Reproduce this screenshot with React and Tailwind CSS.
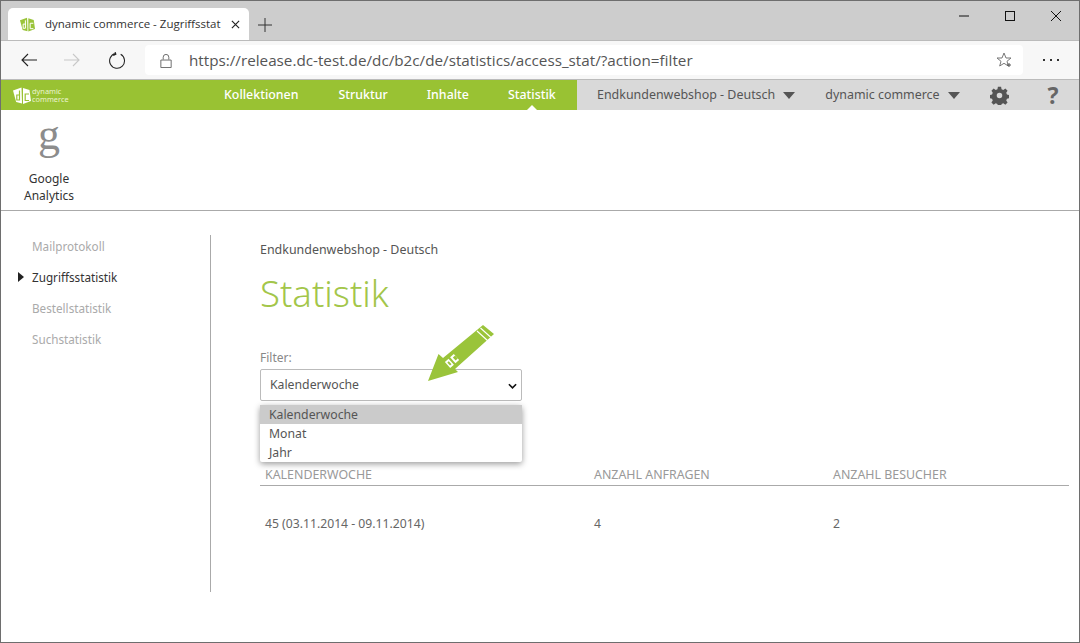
import React from "react";

function Logo({ className, fill, cut }) {
  return (
    <svg viewBox="0 0 18 17" className={className}>
      <path d="M0 3.500 L8.500 0.500 L9 16.500 L3.200 15 L1.500 9 Z" fill={fill} />
      <path d="M10 1 L16.500 3 L18 14 L10 17 Z" fill={fill} />
      <path d="M6.500 3.500 V13 H3.800 V8 H6.500" fill="none" stroke={cut} strokeWidth="1.200" />
      <path d="M16 7 H12.200 V13.500 H16" fill="none" stroke={cut} strokeWidth="1.200" />
    </svg>
  );
}

export default function App() {
  return (
    <div className="w-[1080px] h-[643px] overflow-hidden relative bg-white border border-[#6e6e6e] font-['Noto_Sans',sans-serif] text-[#555]">
      {/* tab strip */}
      <div className="h-[39px] bg-[#cdcdcd] flex items-end pl-[7px] relative">
        <div className="w-[241px] h-[32px] bg-white rounded-t-[5px] flex items-center pl-[12px] pr-[9px]">
          <Logo className="w-[15px] h-[15px] shrink-0" fill="#9ac43a" cut="#ffffff" />
          <span className="ml-[10px] whitespace-nowrap text-[11.500px] text-[#333] font-['Open_Sans',sans-serif]">dynamic commerce - Zugriffsstat</span>
          <svg viewBox="0 0 10 10" className="w-[9px] h-[9px] ml-auto shrink-0"><path d="M1 1 L9 9 M9 1 L1 9" stroke="#222" strokeWidth="1.3" /></svg>
        </div>
        <svg viewBox="0 0 14 14" className="w-[14px] h-[14px] ml-[9px] mb-[8px]"><path d="M7 0 V14 M0 7 H14" stroke="#333" strokeWidth="1" /></svg>
        <div className="ml-auto flex items-center h-[30px] self-start pr-[18px]">
          <svg viewBox="0 0 10 10" className="w-[10px] h-[10px] mr-[36px]"><path d="M0 5 H10" stroke="#111" strokeWidth="1" /></svg>
          <svg viewBox="0 0 10 10" className="w-[10px] h-[10px] mr-[36px]"><rect x=".5" y=".5" width="9" height="9" fill="none" stroke="#111" strokeWidth="1" /></svg>
          <svg viewBox="0 0 10 10" className="w-[10px] h-[10px]"><path d="M0 0 L10 10 M10 0 L0 10" stroke="#111" strokeWidth="1" /></svg>
        </div>
      </div>
      {/* address bar */}
      <div className="h-[40px] bg-[#f7f7f7] border-t border-[#bbb] border-b flex items-center pl-[20px]">
        <svg viewBox="0 0 16 14" className="w-[16px] h-[14px]"><path d="M16 7 H1 M7 1 L1 7 L7 13" fill="none" stroke="#222" strokeWidth="1.1" /></svg>
        <svg viewBox="0 0 16 14" className="w-[16px] h-[14px] ml-[27px]"><path d="M0 7 H15 M9 1 L15 7 L9 13" fill="none" stroke="#c8c8c8" strokeWidth="1.1" /></svg>
        <svg viewBox="0 0 16 16" className="w-[17px] h-[17px] ml-[29px]"><path d="M6 1.500 A7 7 0 1 0 11 2.200 M5.500 -0.500 L6.500 2 L4 3.200" fill="none" stroke="#222" strokeWidth="1" /></svg>
        <div className="ml-[19px] w-[878px] h-[30px] bg-white rounded-[4px] flex items-center pl-[15px] pr-[11px]">
          <svg viewBox="0 0 12 16" className="w-[12px] h-[15px]"><path d="M3 7 V4.500 A3 3 0 0 1 9 4.500 V7 M.5 7.500 H11.500 V15.500 H.5 Z" fill="none" stroke="#666" strokeWidth="1" /></svg>
          <span className="ml-[17px] mt-[1px] text-[15.240px] text-[#555] font-['Open_Sans',sans-serif] whitespace-nowrap">https://release.dc-test.de/dc/b2c/de/statistics/access_stat/?action=filter</span>
          <svg viewBox="0 0 16 16" className="w-[16px] h-[16px] ml-auto"><path d="M8 1 L10 6 H15 L11 9.300 L12.300 14 L8 11.300 L3.700 14 L5 9.300 L1 6 H6 Z" fill="none" stroke="#777" strokeWidth="1" /><path d="M13 11 V15 M11 13 H15" stroke="#555" strokeWidth="1" /></svg>
        </div>
        <span className="ml-[20px] flex gap-[3px]">
          <i className="w-[2px] h-[2px] bg-[#333]" /><i className="w-[2px] h-[2px] bg-[#333] ml-[2px]" /><i className="w-[2px] h-[2px] bg-[#333] ml-[2px]" />
        </span>
      </div>
      {/* nav */}
      <div className="h-[30px] flex">
        <div className="w-[576px] bg-[#99c233] flex items-center text-white relative">
          <div className="flex items-center pl-[12px] w-[223px]">
            <Logo className="w-[18px] h-[17px] shrink-0" fill="#ffffff" cut="#99c233" />
            <span className="ml-[1px] text-[7.400px] leading-[8px] text-[#eaf3d0]">dynamic<br />commerce</span>
          </div>
          <span className="text-[12.400px] font-medium">Kollektionen</span>
          <span className="text-[12.400px] font-medium ml-[40px]">Struktur</span>
          <span className="text-[12.400px] font-medium ml-[39px]">Inhalte</span>
          <span className="text-[12.400px] font-medium ml-[39px]">Statistik</span>
          <span className="absolute left-[526px] bottom-0 w-0 h-0 border-x-[5px] border-x-transparent border-b-[5px] border-b-white" />
        </div>
        <div className="flex-1 bg-[#d9d9d9] flex items-center text-[12.440px] text-[#555] pl-[20px]">
          <span>Endkundenwebshop - Deutsch</span>
          <span className="ml-[8px] w-0 h-0 border-x-[6px] border-x-transparent border-t-[7px] border-t-[#555]" />
          <span className="ml-[30px]">dynamic commerce</span>
          <span className="ml-[8px] w-0 h-0 border-x-[6px] border-x-transparent border-t-[7px] border-t-[#555]" />
          <svg viewBox="0 0 24 24" className="w-[19px] h-[19px] ml-[30px]"><path fill="#555" fillRule="evenodd" d="M10 1h4l.6 3 2.200.9 2.600-1.700 2.800 2.800-1.700 2.600.9 2.200 3 .6v4l-3 .6-.9 2.200 1.700 2.600-2.800 2.800-2.600-1.700-2.200.9-.6 3h-4l-.6-3-2.200-.9-2.600 1.700-2.800-2.800 1.700-2.600-.9-2.200-3-.6v-4l3-.6.9-2.200L1.800 6l2.800-2.800L7.200 4.900 9.400 4zM12 8.500a3.500 3.500 0 1 0 0 7 3.500 3.500 0 0 0 0-7z" /></svg>
          <span className="ml-[39px] text-[23px] font-bold text-[#666] leading-none">?</span>
        </div>
      </div>
      {/* icon row */}
      <div className="h-[101px] border-b border-[#aaa] pl-[19px] pt-[11px]">
        <div className="w-[58px] flex flex-col items-center">
          <span className="font-['Liberation_Serif',serif] text-[44px] leading-[28px] text-[#8c8c8c] h-[45px]">g</span>
          <span className="text-[12px] leading-[17px] text-[#333] text-center mt-[4px]">Google Analytics</span>
        </div>
      </div>
      {/* body */}
      <div className="flex relative">
        <div className="w-[210px] h-[357px] mt-[24px] border-r border-[#aaa] pt-[1px] pl-[31px] text-[11.700px] flex flex-col">
          <span className="h-[31px] leading-[20px] text-[#aaa]">Mailprotokoll</span>
          <span className="h-[31px] leading-[20px] text-[#333] relative">
            <span className="absolute left-[-14px] top-[5px] w-0 h-0 border-y-[5px] border-y-transparent border-l-[6px] border-l-[#222]" />
            Zugriffsstatistik
          </span>
          <span className="h-[31px] leading-[20px] text-[#aaa]">Bestellstatistik</span>
          <span className="h-[31px] leading-[20px] text-[#aaa]">Suchstatistik</span>
        </div>
        <div className="flex-1 pl-[49px] pr-[10px] pt-[29px]">
          <p className="text-[12.440px] leading-[20px] text-[#555]">Endkundenwebshop - Deutsch</p>
          <h1 className="text-[36.500px] leading-[48px] font-light text-[#a3c64a] mt-[9px]">Statistik</h1>
          <p className="text-[12px] leading-[16px] text-[#888] mt-[33px]">Filter:</p>
          <div className="w-[262px] h-[32px] mt-[3px] border border-[#bbb] rounded-[2px] flex items-center pl-[9px] pr-[3px] pt-[1px] text-[12.250px] text-[#555]">
            Kalenderwoche
            <svg viewBox="0 0 10 6" className="w-[9px] h-[6px] ml-auto mr-[1px]"><path d="M1 1 L5 5 L9 1" fill="none" stroke="#111" strokeWidth="1.800" /></svg>
          </div>
          <div className="mt-[64px] grid grid-cols-[329px_239px_1fr] border-b border-[#aaa] h-[21px] pl-[5px] pt-[2px] text-[12.400px] text-[#999] uppercase leading-[16px]">
            <span>Kalenderwoche</span>
            <span>Anzahl Anfragen</span>
            <span>Anzahl Besucher</span>
          </div>
          <div className="grid grid-cols-[329px_239px_1fr] pl-[5px] pt-[29px] text-[12.200px] leading-[18px] text-[#666]">
            <span>45 (03.11.2014 - 09.11.2014)</span>
            <span>4</span>
            <span>2</span>
          </div>
        </div>
        {/* dropdown */}
        <div className="absolute left-[259px] top-[194px] w-[262px] rounded-[2px] bg-white shadow-[0_2px_6px_rgba(0,0,0,0.4)] text-[12.250px] leading-[19px] text-[#555]">
          <div className="h-[19px] bg-[#cbcbcb] pl-[9px]">Kalenderwoche</div>
          <div className="h-[19px] pl-[9px]">Monat</div>
          <div className="h-[19px] pl-[9px]">Jahr</div>
        </div>
        {/* arrow */}
        <svg viewBox="0 0 70 65" className="absolute left-[426px] top-[109px] w-[70px] h-[65px]">
          <path d="M1 61 L11.500 34 L16 38 L56 5 L67 14 L28 49 L31 52 Z" fill="#9ac43a" />
          <path d="M50 11 L61 21 M53.500 8 L64 17.500" stroke="#fff" strokeWidth="1.100" />
          <g transform="rotate(-42 25 41)">
            <rect x="19" y="37" width="5" height="8" fill="#fff" />
            <rect x="26" y="37" width="5" height="8" fill="#fff" />
            <rect x="20.500" y="39" width="2" height="4" fill="#9ac43a" />
            <rect x="28" y="39" width="3" height="4" fill="#9ac43a" />
          </g>
        </svg>
      </div>
    </div>
  );
}
